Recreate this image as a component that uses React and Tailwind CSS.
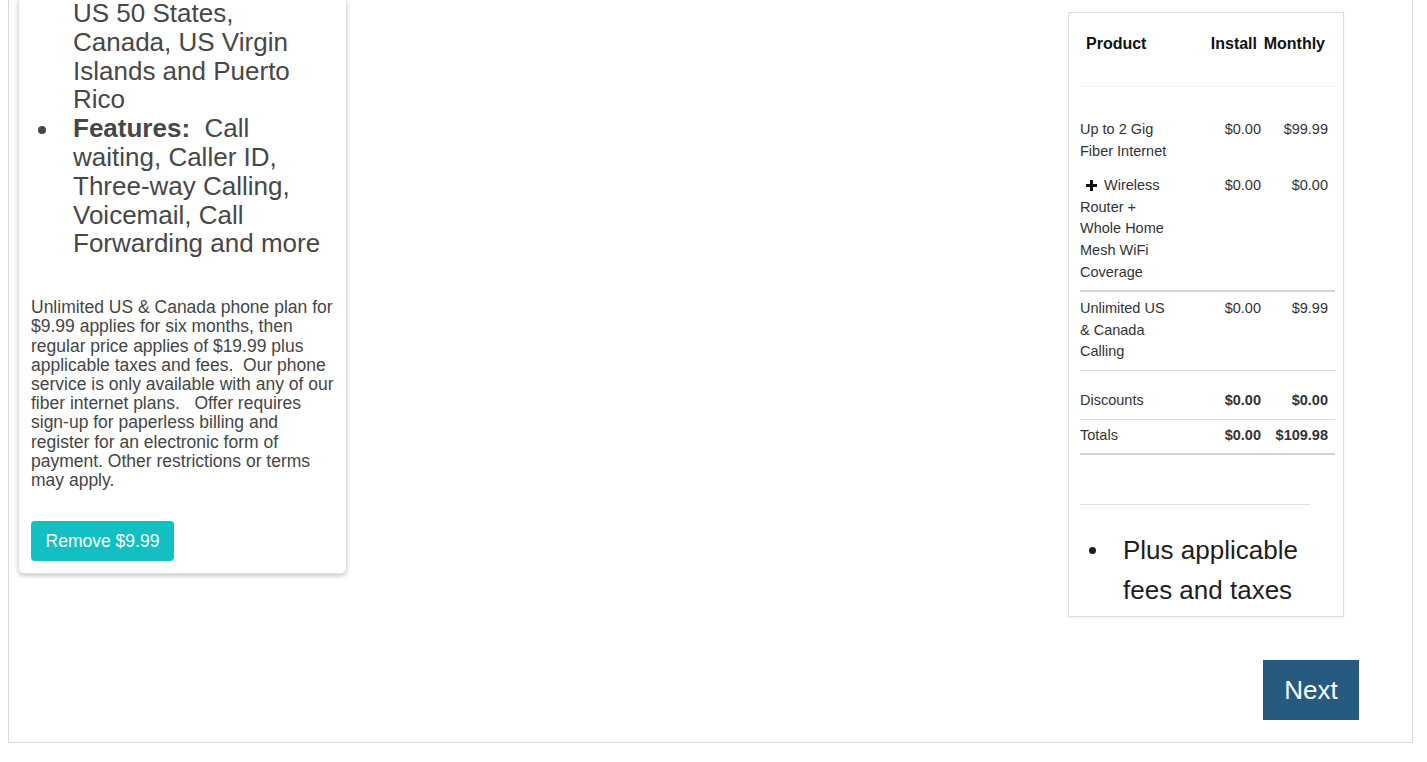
import React from "react";

const F = { fontFamily: '"Liberation Sans", Arial, Helvetica, sans-serif' };

function Line({ children }) {
  return <span className="block whitespace-nowrap">{children}</span>;
}

function PlusIcon() {
  return (
    <svg width="11" height="11" viewBox="0 0 11 11" className="inline-block align-[-1px]">
      <rect x="4" y="0" width="3" height="11" fill="#111" />
      <rect x="0" y="4" width="11" height="3" fill="#111" />
    </svg>
  );
}

function Row({ className = "", product, install, monthly, bold = false }) {
  return (
    <div className={`grid grid-cols-[115px_66px_74px] text-[14.5px] leading-[21.6px] text-[#333] ${className}`}>
      <div>{product}</div>
      <div className={`text-right ${bold ? "font-bold" : ""}`}>{install}</div>
      <div className={`text-right pr-[7px] ${bold ? "font-bold" : ""}`}>{monthly}</div>
    </div>
  );
}

export default function App() {
  return (
    <div className="h-[762px] overflow-hidden bg-white" style={F}>
      <div className="ml-[8px] w-[1405px] border-x border-b border-[#d9d9d9] pl-[9px] pr-[68px] pb-[22px]">
        <div className="flex items-start justify-between">
          {/* Left card */}
          <div className="w-[329px] rounded-b-[6px] border-x border-b border-[#e2e2e2] bg-white px-[12px] pb-[12px] shadow-[0_2px_4px_rgba(0,0,0,0.22)]">
            <ul className="-mt-[1px] text-[26px] leading-[28.8px] text-[#474747]">
              <li className="pl-[42px]">
                <Line>US 50 States,</Line>
                <Line>Canada, US Virgin</Line>
                <Line>Islands and Puerto</Line>
                <Line>Rico</Line>
              </li>
              <li className="flex">
                <span className="w-[42px] shrink-0 pl-[7px] pt-[12px]">
                  <span className="block h-[8px] w-[8px] rounded-full bg-[#474747]" />
                </span>
                <span>
                  <Line>
                    <b className="font-bold">Features:</b>{"\u00a0 Call"}
                  </Line>
                  <Line>waiting, Caller ID,</Line>
                  <Line>Three-way Calling,</Line>
                  <Line>Voicemail, Call</Line>
                  <Line>Forwarding and more</Line>
                </span>
              </li>
            </ul>
            <p className="mt-[40px] text-[17.5px] leading-[19.2px] text-[#454545]">
              <Line>Unlimited US &amp; Canada phone plan for</Line>
              <Line>$9.99 applies for six months, then</Line>
              <Line>regular price applies of $19.99 plus</Line>
              <Line>{"applicable taxes and fees.\u00a0 Our phone"}</Line>
              <Line>service is only available with any of our</Line>
              <Line>{"fiber internet plans.\u00a0 \u00a0Offer requires"}</Line>
              <Line>sign-up for paperless billing and</Line>
              <Line>register for an electronic form of</Line>
              <Line>payment. Other restrictions or terms</Line>
              <Line>may apply.</Line>
            </p>
            <button className="mt-[31px] flex h-[40px] w-[143px] items-center justify-center rounded-[4px] bg-[#13c0c1] text-[17.5px] text-white">
              Remove $9.99
            </button>
          </div>

          {/* Right summary panel */}
          <div className="mt-[12px] w-[276px] border border-[#dedede] bg-white pl-[11px] pr-[8px] pb-[6px] shadow-[0_1px_2px_rgba(0,0,0,0.08)]">
            <div className="grid h-[74px] grid-cols-[115px_66px_74px] border-b border-[#f0f0f0] pt-[22px] text-[16px] font-bold leading-[18.4px] text-[#111]">
              <div className="pl-[6px]">Product</div>
              <div className="text-right pr-[4px]">Install</div>
              <div className="text-right pr-[10px]">Monthly</div>
            </div>
            <Row
              className="pt-[32px] pb-[13px]"
              product={
                <>
                  <Line>Up to 2 Gig</Line>
                  <Line>Fiber Internet</Line>
                </>
              }
              install="$0.00"
              monthly="$99.99"
            />
            <Row
              className="pb-[7px] border-b-2 border-[#d4d4d4]"
              product={
                <>
                  <Line>
                    <span className="ml-[6px] mr-[7px]">
                      <PlusIcon />
                    </span>
                    Wireless
                  </Line>
                  <Line>Router +</Line>
                  <Line>Whole Home</Line>
                  <Line>Mesh WiFi</Line>
                  <Line>Coverage</Line>
                </>
              }
              install="$0.00"
              monthly="$0.00"
            />
            <Row
              className="pt-[6px] pb-[7px] border-b border-[#dddddd]"
              product={
                <>
                  <Line>Unlimited US</Line>
                  <Line>&amp; Canada</Line>
                  <Line>Calling</Line>
                </>
              }
              install="$0.00"
              monthly="$9.99"
            />
            <Row
              className="pt-[19px] pb-[7px] border-b border-[#dddddd]"
              product="Discounts"
              install="$0.00"
              monthly="$0.00"
              bold
            />
            <Row
              className="pt-[5px] pb-[7px] border-b-2 border-[#d4d4d4]"
              product="Totals"
              install="$0.00"
              monthly="$109.98"
              bold
            />
            <div className="mt-[49px] h-px w-[230px] bg-[#e2e2e2]" />
            <ul className="mt-[25px] text-[26px] leading-[40px] text-[#1e1e1e]">
              <li className="flex">
                <span className="w-[43px] shrink-0 pl-[9px] pt-[17px]">
                  <span className="block h-[7px] w-[7px] rounded-full bg-[#1e1e1e]" />
                </span>
                <span>
                  <Line>Plus applicable</Line>
                  <Line>fees and taxes</Line>
                </span>
              </li>
            </ul>
          </div>
        </div>

        <div className="mt-[43px] flex justify-end">
          <button className="-mr-[15px] flex h-[60px] w-[96px] items-center justify-center bg-[#265a7e] text-[26px] text-white">
            Next
          </button>
        </div>
      </div>
    </div>
  );
}
